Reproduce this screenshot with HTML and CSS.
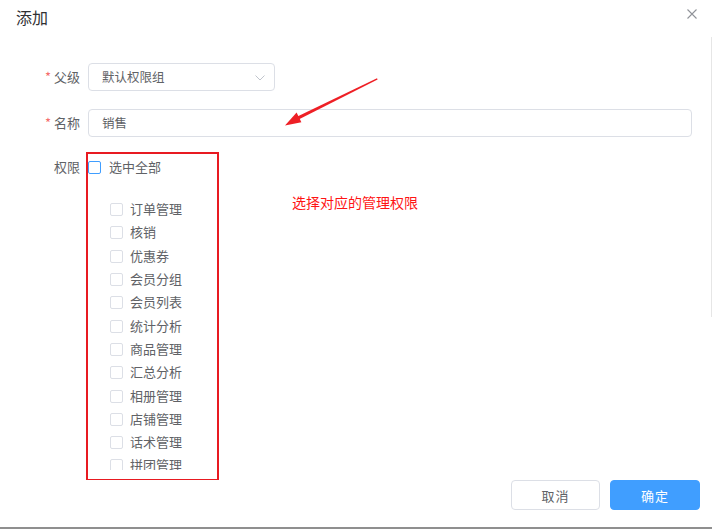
FILE: index.html
```html
<!DOCTYPE html>
<html lang="zh">
<head>
<meta charset="utf-8">
<title>添加</title>
<link rel="stylesheet" href="styles.css">
</head>
<body>
<div class="dialog">
  <header class="dlg-header">
    <span class="dlg-title">添加</span>
    <button class="dlg-close" type="button" aria-label="关闭">
      <svg width="10" height="10" viewBox="0 0 10 10"><path d="M0.5 0.5 L9.5 9.5 M9.5 0.5 L0.5 9.5" stroke="#909399" stroke-width="1.1" fill="none"/></svg>
    </button>
  </header>

  <div class="dlg-body">
    <div class="form-item">
      <label class="form-label req">父级</label>
      <div class="select">
        <span>默认权限组</span>
        <svg class="chev" width="10" height="6" viewBox="0 0 10 6"><path d="M0.5 0.5 L5 5 L9.5 0.5" stroke="#c0c4cc" stroke-width="1" fill="none"/></svg>
      </div>
    </div>

    <div class="form-item">
      <label class="form-label req">名称</label>
      <div class="input">销售</div>
    </div>

    <div class="form-item perm-item">
      <label class="form-label">权限</label>
      <div class="perm-box">
        <div class="cb-row all"><span class="cb active"></span><span class="cb-text">选中全部</span></div>
        <div class="cb-list">
          <div class="cb-row"><span class="cb"></span><span class="cb-text">订单管理</span></div>
          <div class="cb-row"><span class="cb"></span><span class="cb-text">核销</span></div>
          <div class="cb-row"><span class="cb"></span><span class="cb-text">优惠券</span></div>
          <div class="cb-row"><span class="cb"></span><span class="cb-text">会员分组</span></div>
          <div class="cb-row"><span class="cb"></span><span class="cb-text">会员列表</span></div>
          <div class="cb-row"><span class="cb"></span><span class="cb-text">统计分析</span></div>
          <div class="cb-row"><span class="cb"></span><span class="cb-text">商品管理</span></div>
          <div class="cb-row"><span class="cb"></span><span class="cb-text">汇总分析</span></div>
          <div class="cb-row"><span class="cb"></span><span class="cb-text">相册管理</span></div>
          <div class="cb-row"><span class="cb"></span><span class="cb-text">店铺管理</span></div>
          <div class="cb-row"><span class="cb"></span><span class="cb-text">话术管理</span></div>
          <div class="cb-row"><span class="cb"></span><span class="cb-text">拼团管理</span></div>
        </div>
      </div>
      <div class="hint">选择对应的管理权限</div>
    </div>
  </div>

  <footer class="dlg-footer">
    <button class="btn" type="button">取消</button>
    <button class="btn primary" type="button">确定</button>
  </footer>

  <svg class="annot-arrow" width="712" height="529" viewBox="0 0 712 529">
    <polygon points="377,78.3 377.6,79.5 298.6,119.5 297.4,116.5" fill="#ee1f25"/>
    <polygon points="285,125.5 296.6,112.6 301.4,122.2" fill="#ee1f25"/>
  </svg>
  <div class="page-scroll"></div>
</div>
</body>
</html>
```

FILE: styles.css
```css
* { box-sizing: border-box; }

html, body {
  margin: 0;
  padding: 0;
  background: #fff;
}

body {
  font-family: "Noto Sans CJK SC", "Noto Sans", "Liberation Sans", sans-serif;
  color: #606266;
}

.dialog {
  position: relative;
  width: 712px;
  height: 529px;
  display: flex;
  flex-direction: column;
  background: #fff;
  overflow: hidden;
}

/* header */
.dlg-header {
  height: 34px;
  flex: none;
  display: flex;
  align-items: center;
  justify-content: space-between;
  padding: 0 14px 0 16px;
}

.dlg-title {
  font-size: 16px;
  line-height: 20px;
  color: #303133;
}

.dlg-close {
  border: 0;
  background: none;
  padding: 0;
  width: 12px;
  height: 12px;
  display: flex;
  align-items: center;
  justify-content: center;
  margin-top: -6px;
  cursor: pointer;
}

/* body / form */
.dlg-body {
  flex: 1;
  min-height: 0;
  padding: 29px 20px 0 8px;
  overflow: hidden;
}

.form-item {
  display: flex;
  align-items: flex-start;
  margin-bottom: 18px;
}

.form-label {
  width: 80px;
  flex: none;
  text-align: right;
  padding-right: 8px;
  font-size: 13px;
  line-height: 28px;
  color: #606266;
}

.form-label.req::before {
  content: "*";
  color: #f56c6c;
  margin-right: 3px;
}

.select,
.input {
  height: 28px;
  border: 1px solid #dcdfe6;
  border-radius: 4px;
  padding: 0 9px 0 13px;
  font-size: 12.5px;
  line-height: 26px;
  color: #606266;
  background: #fff;
}

.select {
  width: 187px;
  display: flex;
  align-items: center;
  justify-content: space-between;
}

.chev { display: block; margin-top: 1px; }

.input {
  flex: 1;
}

/* permissions */
.perm-item {
  margin-top: -1px;
}

.perm-item .form-label {
  line-height: 26px;
}

.perm-box {
  width: 129px;
  height: 325px;
  flex: none;
  outline: 2px solid #e81a21;
  display: flex;
  flex-direction: column;
}

.cb-row {
  display: flex;
  align-items: center;
  height: 23.3px;
  font-size: 13px;
  color: #606266;
}

.cb-row.all {
  height: 27px;
  flex: none;
}

.cb {
  width: 13px;
  height: 13px;
  flex: none;
  border: 1px solid #dcdfe6;
  border-radius: 2px;
  background: #fff;
  margin-right: 7px;
}

.cb.active {
  border-color: #409eff;
  margin-right: 8px;
}

.cb-text {
  line-height: 18px;
  margin-top: -1px;
}

.cb-list {
  margin-top: 17px;
  padding-left: 22px;
  height: 272px;
  overflow: hidden;
  flex: none;
}

.hint {
  margin-left: 75px;
  margin-top: 38px;
  font-size: 14px;
  line-height: 20px;
  color: #ff1414;
  white-space: nowrap;
}

/* footer */
.dlg-footer {
  height: 49px;
  flex: none;
  display: flex;
  justify-content: flex-end;
  align-items: flex-start;
  gap: 10px;
  padding-right: 12px;
  border-bottom: 2px solid #8f8f8f;
}

.btn {
  width: 89px;
  height: 30px;
  border: 1px solid #dcdfe6;
  border-radius: 4px;
  background: #fff;
  color: #606266;
  font-family: inherit;
  font-size: 13px;
  letter-spacing: 1px;
  padding: 0;
  cursor: pointer;
}

.btn.primary {
  width: 90px;
  background: #409eff;
  border-color: #409eff;
  color: #fff;
}

/* overlays */
.annot-arrow {
  position: absolute;
  left: 0;
  top: 0;
  pointer-events: none;
}

.page-scroll {
  position: absolute;
  right: 0;
  top: 37px;
  width: 1px;
  height: 280px;
  background: #e6e6e6;
}
```
